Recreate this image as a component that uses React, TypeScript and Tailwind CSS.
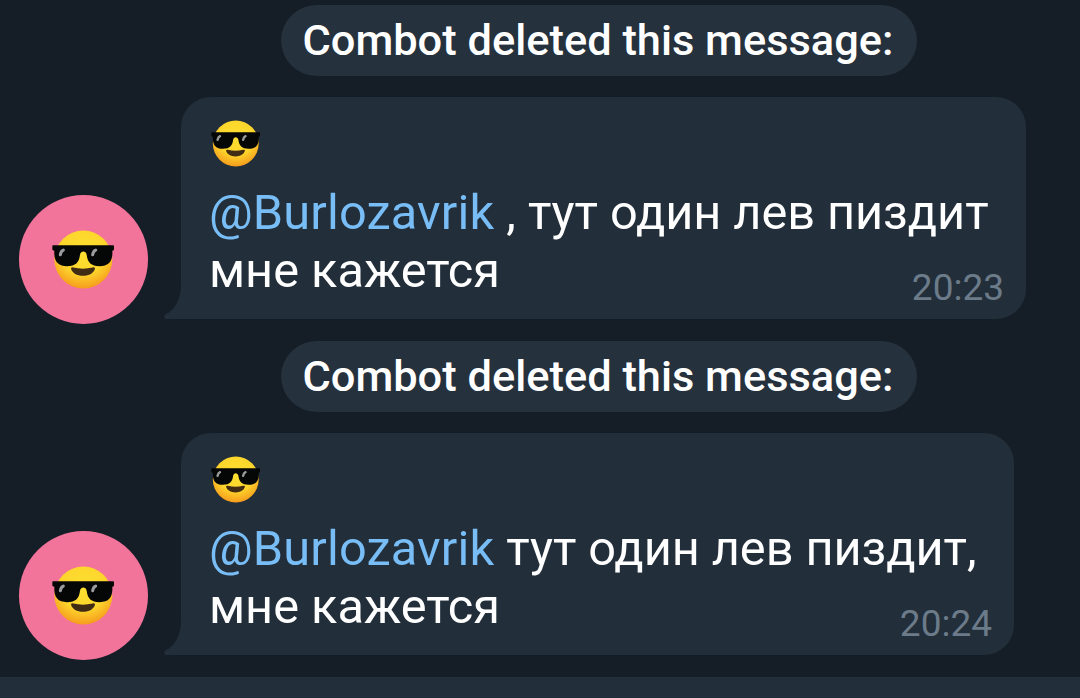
import { useId } from "react";

type Message = {
  id: number;
  mention: string;
  firstLine: string;
  secondLine: string;
  time: string;
  width: string;
};

const messages: Message[] = [
  {
    id: 1,
    mention: "@Burlozavrik",
    firstLine: " , тут один лев пиздит",
    secondLine: "мне кажется",
    time: "20:23",
    width: "w-[845px]",
  },
  {
    id: 2,
    mention: "@Burlozavrik",
    firstLine: " тут один лев пиздит,",
    secondLine: "мне кажется",
    time: "20:24",
    width: "w-[833px]",
  },
];

export default function App() {
  return (
    <div className="flex h-[698px] w-[1080px] flex-col overflow-hidden bg-[#151e27] font-['Roboto',sans-serif] text-white">
      <main className="flex flex-1 flex-col gap-[22px] pt-[5px]">
        {messages.map((message) => (
          <section key={message.id} className="flex flex-col gap-[21px]">
            <ServiceLabel />
            <MessageRow message={message} />
          </section>
        ))}
      </main>
      <footer className="h-[21px] shrink-0 bg-[#222e3a]" />
    </div>
  );
}

function ServiceLabel() {
  return (
    <div className="ml-[281px] flex h-[71px] w-[636px] items-center justify-center rounded-full bg-[#25313c] pr-[2px]">
      <span className="whitespace-nowrap text-[43.4px] leading-[71px] font-medium">
        Combot deleted this message:
      </span>
    </div>
  );
}

function MessageRow({ message }: { message: Message }) {
  return (
    <article className="flex h-[222px] items-end pl-[19px]">
      <div className="-mb-[5px] flex size-[129px] shrink-0 items-center justify-center rounded-full bg-[#f2749a] pr-px">
        <SunglassesFace className="h-[59px] w-[62px]" />
      </div>

      <div
        className={`relative ml-[33px] h-[222px] shrink-0 rounded-[30px] rounded-bl-none bg-[#222e39] pt-[23px] pl-[28px] ${message.width}`}
      >
        <BubbleTail />
        <SunglassesFace className="ml-[2px] h-[47px] w-[49px]" />
        <p className="mt-[17px] text-[48.7px] leading-[58px] whitespace-pre">
          <span className="tracking-[0.15px] text-[#78bdf5]">{message.mention}</span>
          <span className="tracking-[-0.05px]">{message.firstLine}</span>
          <br />
          {message.secondLine}
        </p>
        <time className="absolute right-[22px] bottom-[9px] text-[37px] leading-[44px] text-[#6c7b89]">
          {message.time}
        </time>
      </div>
    </article>
  );
}

function BubbleTail() {
  return (
    <svg
      className="absolute bottom-0 -left-[17px] h-[42px] w-[18px]"
      viewBox="0 0 18 42"
      fill="#222e39"
      aria-hidden="true"
    >
      <path d="M18 0H17V8C17 21 12 32 1.5 37.5C-.7 38.8-.2 42 3 42H18Z" />
    </svg>
  );
}

function SunglassesFace({ className }: { className: string }) {
  const id = useId();
  return (
    <svg className={className} viewBox="0 0 186 176" role="img" aria-label="😎">
      <defs>
        <radialGradient id={`${id}-skin`} cx=".5" cy=".35" r=".66">
          <stop offset="0" stopColor="#fde030" />
          <stop offset=".6" stopColor="#fdd52c" />
          <stop offset="1" stopColor="#f59a1c" />
        </radialGradient>
      </defs>
      <circle cx="94" cy="88" r="87" fill={`url(#${id}-skin)`} />
      {/* glasses */}
      <path
        fill="#050606"
        d="M3 45H183Q186 45 186 49V58Q186 61 181 62C183 95 169 108 143 108C117 108 107 98 104 74C102 61 86 61 84 74C81 98 71 108 45 108C19 108 5 95 7 62Q1 61 1 58V49Q1 45 3 45Z"
      />
      <path
        d="M25 74C26 67 29 62 34 60M122 74C123 67 126 62 131 60"
        fill="none"
        stroke="#999d9e"
        strokeWidth="9"
        strokeLinecap="round"
      />
      <path d="M57 115Q58 110 64 112Q93 119 122 112Q128 110 129 115C126 129 111 137 93 137C75 137 60 129 57 115Z" fill="#402c15" />
    </svg>
  );
}
